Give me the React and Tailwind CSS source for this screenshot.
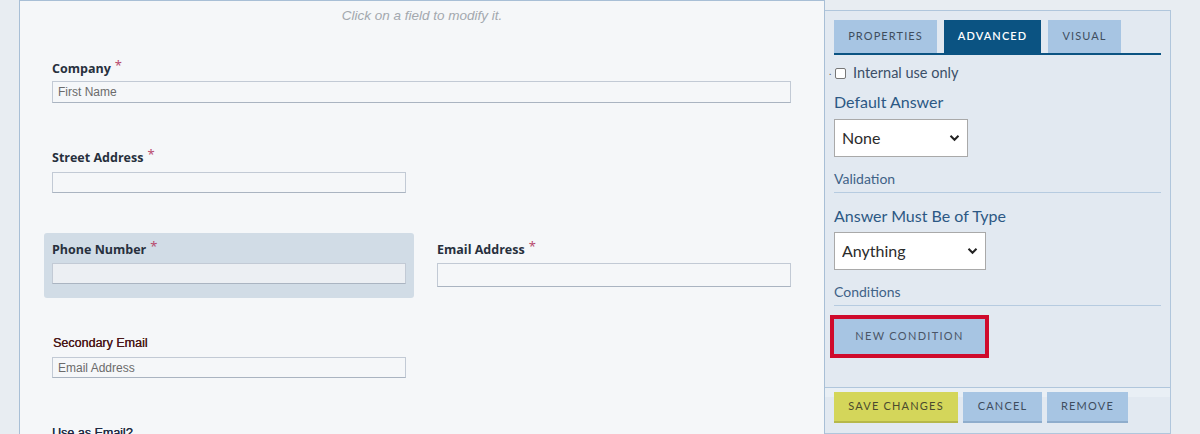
import { useState } from "react"

const labelFont = { fontFamily: '"Open Sans", "Liberation Sans", sans-serif' }

function Star() {
    return <span className="text-[#b84a6e] text-[13px] leading-none relative -top-[2px] ml-[4px] font-normal">*</span>
}

function Label({ children }) {
    return (
        <div className="h-4 flex items-start overflow-visible">
            <span className="leading-4 text-[12.5px] font-bold text-[#27303d]" style={labelFont}>{children}</span>
            <Star />
        </div>
    )
}

function Chevron() {
    return (
        <svg width="11" height="8" viewBox="0 0 11 8" className="absolute right-[8px] top-1/2 -translate-y-1/2 pointer-events-none">
            <path d="M1.5 1.8 L5.5 5.8 L9.5 1.8" fill="none" stroke="#222" strokeWidth="2" />
        </svg>
    )
}

function Select({ value, options, width }) {
    const [val, setVal] = useState(value)
    return (
        <div className={`relative h-[38px] ${width}`}>
            <select
                value={val}
                onChange={e => setVal(e.target.value)}
                className="appearance-none w-full h-full bg-white border border-[#a9a9a9] pl-[7px] text-[16px] text-[#2b2b2b] outline-none"
                style={{ fontFamily: 'Lato, "Open Sans", sans-serif' }}
            >
                {options.map(o => <option key={o}>{o}</option>)}
            </select>
            <Chevron />
        </div>
    )
}

export default function App() {
    return (
        <div className="w-[1200px] h-[434px] overflow-hidden bg-[#e8edf2] flex items-start">
            {/* form canvas */}
            <div className="ml-[19px] w-[806px] h-[434px] bg-[#f5f7f9] border-l border-t border-r border-[#a8bfd6] pl-[32px] pr-[32px]">
                <p className="mt-[6px] h-[18px] leading-[18px] text-center text-[13.5px] italic text-[#a3a8ae] -ml-[32px] -mr-[32px]" style={{ fontFamily: '"Liberation Sans", Arial, sans-serif' }}>
                    Click on a field to modify it.
                </p>

                <div className="mt-[36px] w-[739px]">
                    <Label>Company</Label>
                    <input placeholder="First Name" className="block mt-[4px] w-full h-[22px] bg-[#f5f7f9] border border-[#c2cad5] border-b-[#aab4c1] px-[5px] text-[12px] text-[#555] placeholder:text-[#6b6b6b] outline-none" style={{ fontFamily: '"Liberation Sans", Arial, sans-serif' }} />
                </div>

                <div className="mt-[47px] w-[354px]">
                    <Label>Street Address</Label>
                    <input className="block mt-[6px] w-full h-[21px] bg-[#f5f7f9] border border-[#c2cad5] border-b-[#aab4c1] outline-none" />
                </div>

                <div className="mt-[40px] grid grid-cols-[354px_354px] gap-x-[31px] items-start">
                    <div className="-mx-[8px] px-[8px] pt-[9px] pb-[14px] bg-[#d1dce6] rounded-[3px]">
                        <Label>Phone Number</Label>
                        <input className="block mt-[5px] w-full h-[21px] bg-[#eceff3] border border-[#c2cad5] border-b-[#aab4c1] outline-none" />
                    </div>
                    <div className="pt-[9px]">
                        <Label>Email Address</Label>
                        <input className="block mt-[5px] w-full h-[24px] bg-[#f5f7f9] border border-[#c2cad5] border-b-[#aab4c1] outline-none" />
                    </div>
                </div>

                <div className="mt-[37px] w-[354px]" style={{ fontFamily: '"Liberation Sans", Arial, sans-serif' }}>
                    <p className="h-4 leading-4 text-[12.5px] text-[#4a1818] pl-px [text-shadow:0.25px_0_0_#4a1818]">Secondary Email</p>
                    <input placeholder="Email Address" className="block mt-[6px] w-full h-[21px] bg-[#f5f7f9] border border-[#c2cad5] border-b-[#aab4c1] px-[5px] text-[12px] placeholder:text-[#6b6b6b] outline-none" />
                    <p className="mt-[47px] h-4 leading-4 text-[12.5px] text-[#1f2a44] [text-shadow:0.25px_0_0_#1f2a44]">Use as Email?</p>
                </div>
            </div>

            {/* properties panel */}
            <div className="mt-[10px] w-[346px] h-[424px] bg-[#e2e9f1] border-t border-r border-b border-[#b0c6dc] flex flex-col" style={{ fontFamily: 'Lato, "Open Sans", sans-serif' }}>
                <div className="flex-1 pt-[9px] px-[9px]">
                    <div className="flex gap-[7px] border-b-2 border-[#0b5382] w-[327px]">
                        <div className="w-[103px] h-[33px] flex items-center justify-center bg-[#a7c5e3] text-[11px] tracking-[1.1px] text-[#3e4d5e]">PROPERTIES</div>
                        <div className="w-[97px] h-[33px] flex items-center justify-center bg-[#0b5382] text-[11px] tracking-[1.1px] text-white font-semibold">ADVANCED</div>
                        <div className="w-[73px] h-[33px] flex items-center justify-center bg-[#a7c5e3] text-[11px] tracking-[1.1px] text-[#3e4d5e]">VISUAL</div>
                    </div>

                    <div className="mt-[8px] h-[20px] flex items-center -ml-[5px] text-[14.5px] text-[#3b4f68]">
                        <span className="text-[#555] text-[10px] w-[5px] -mt-[4px]">.</span>
                        <span className="ml-[1px] w-[11px] h-[11px] border border-[#777] rounded-[2px] bg-white"></span>
                        <span className="ml-[7px]">Internal use only</span>
                    </div>

                    <p className="mt-[9px] leading-[20px] text-[16px] text-[#2c5884]">Default Answer</p>
                    <div className="mt-[7px]">
                        <Select value="None" options={["None", "Custom"]} width="w-[134px]" />
                    </div>

                    <p className="mt-[13px] leading-[18px] text-[14px] text-[#3f6287] pb-[4px] border-b border-[#b6cbe0]">Validation</p>

                    <p className="mt-[13px] leading-[20px] text-[16px] text-[#2c5884]">Answer Must Be of Type</p>
                    <div className="mt-[6px]">
                        <Select value="Anything" options={["Anything", "Number", "Email", "Date"]} width="w-[152px]" />
                    </div>

                    <p className="mt-[13px] leading-[18px] text-[14px] text-[#3f6287] pb-[4px] border-b border-[#b6cbe0]">Conditions</p>

                    <button type="button" className="mt-[13px] w-[151px] h-[35px] bg-[#a7c5e3] outline-4 outline-[#cf0a2c] text-[11px] tracking-[1.3px] text-[#4a5668]">
                        NEW CONDITION
                    </button>
                </div>

                <div className="h-[46px] border-t border-[#b0c6dc] bg-[linear-gradient(to_bottom,#e9eff5_0,#e9eff5_9px,#e2e9f1_9px)] pt-[4px] px-[9px] flex gap-[5px] items-start">
                    <button type="button" className="w-[124px] h-[31px] bg-[#d4d65a] border-b-2 border-[#b6b84a] text-[11px] tracking-[1.2px] text-[#4b4b2e]">SAVE CHANGES</button>
                    <button type="button" className="w-[79px] h-[31px] bg-[#a7c5e3] border-b-2 border-[#8fadcc] text-[11px] tracking-[1.2px] text-[#3e4d5e]">CANCEL</button>
                    <button type="button" className="w-[81px] h-[31px] bg-[#a7c5e3] border-b-2 border-[#8fadcc] text-[11px] tracking-[1.2px] text-[#3e4d5e]">REMOVE</button>
                </div>
            </div>
        </div>
    )
}
